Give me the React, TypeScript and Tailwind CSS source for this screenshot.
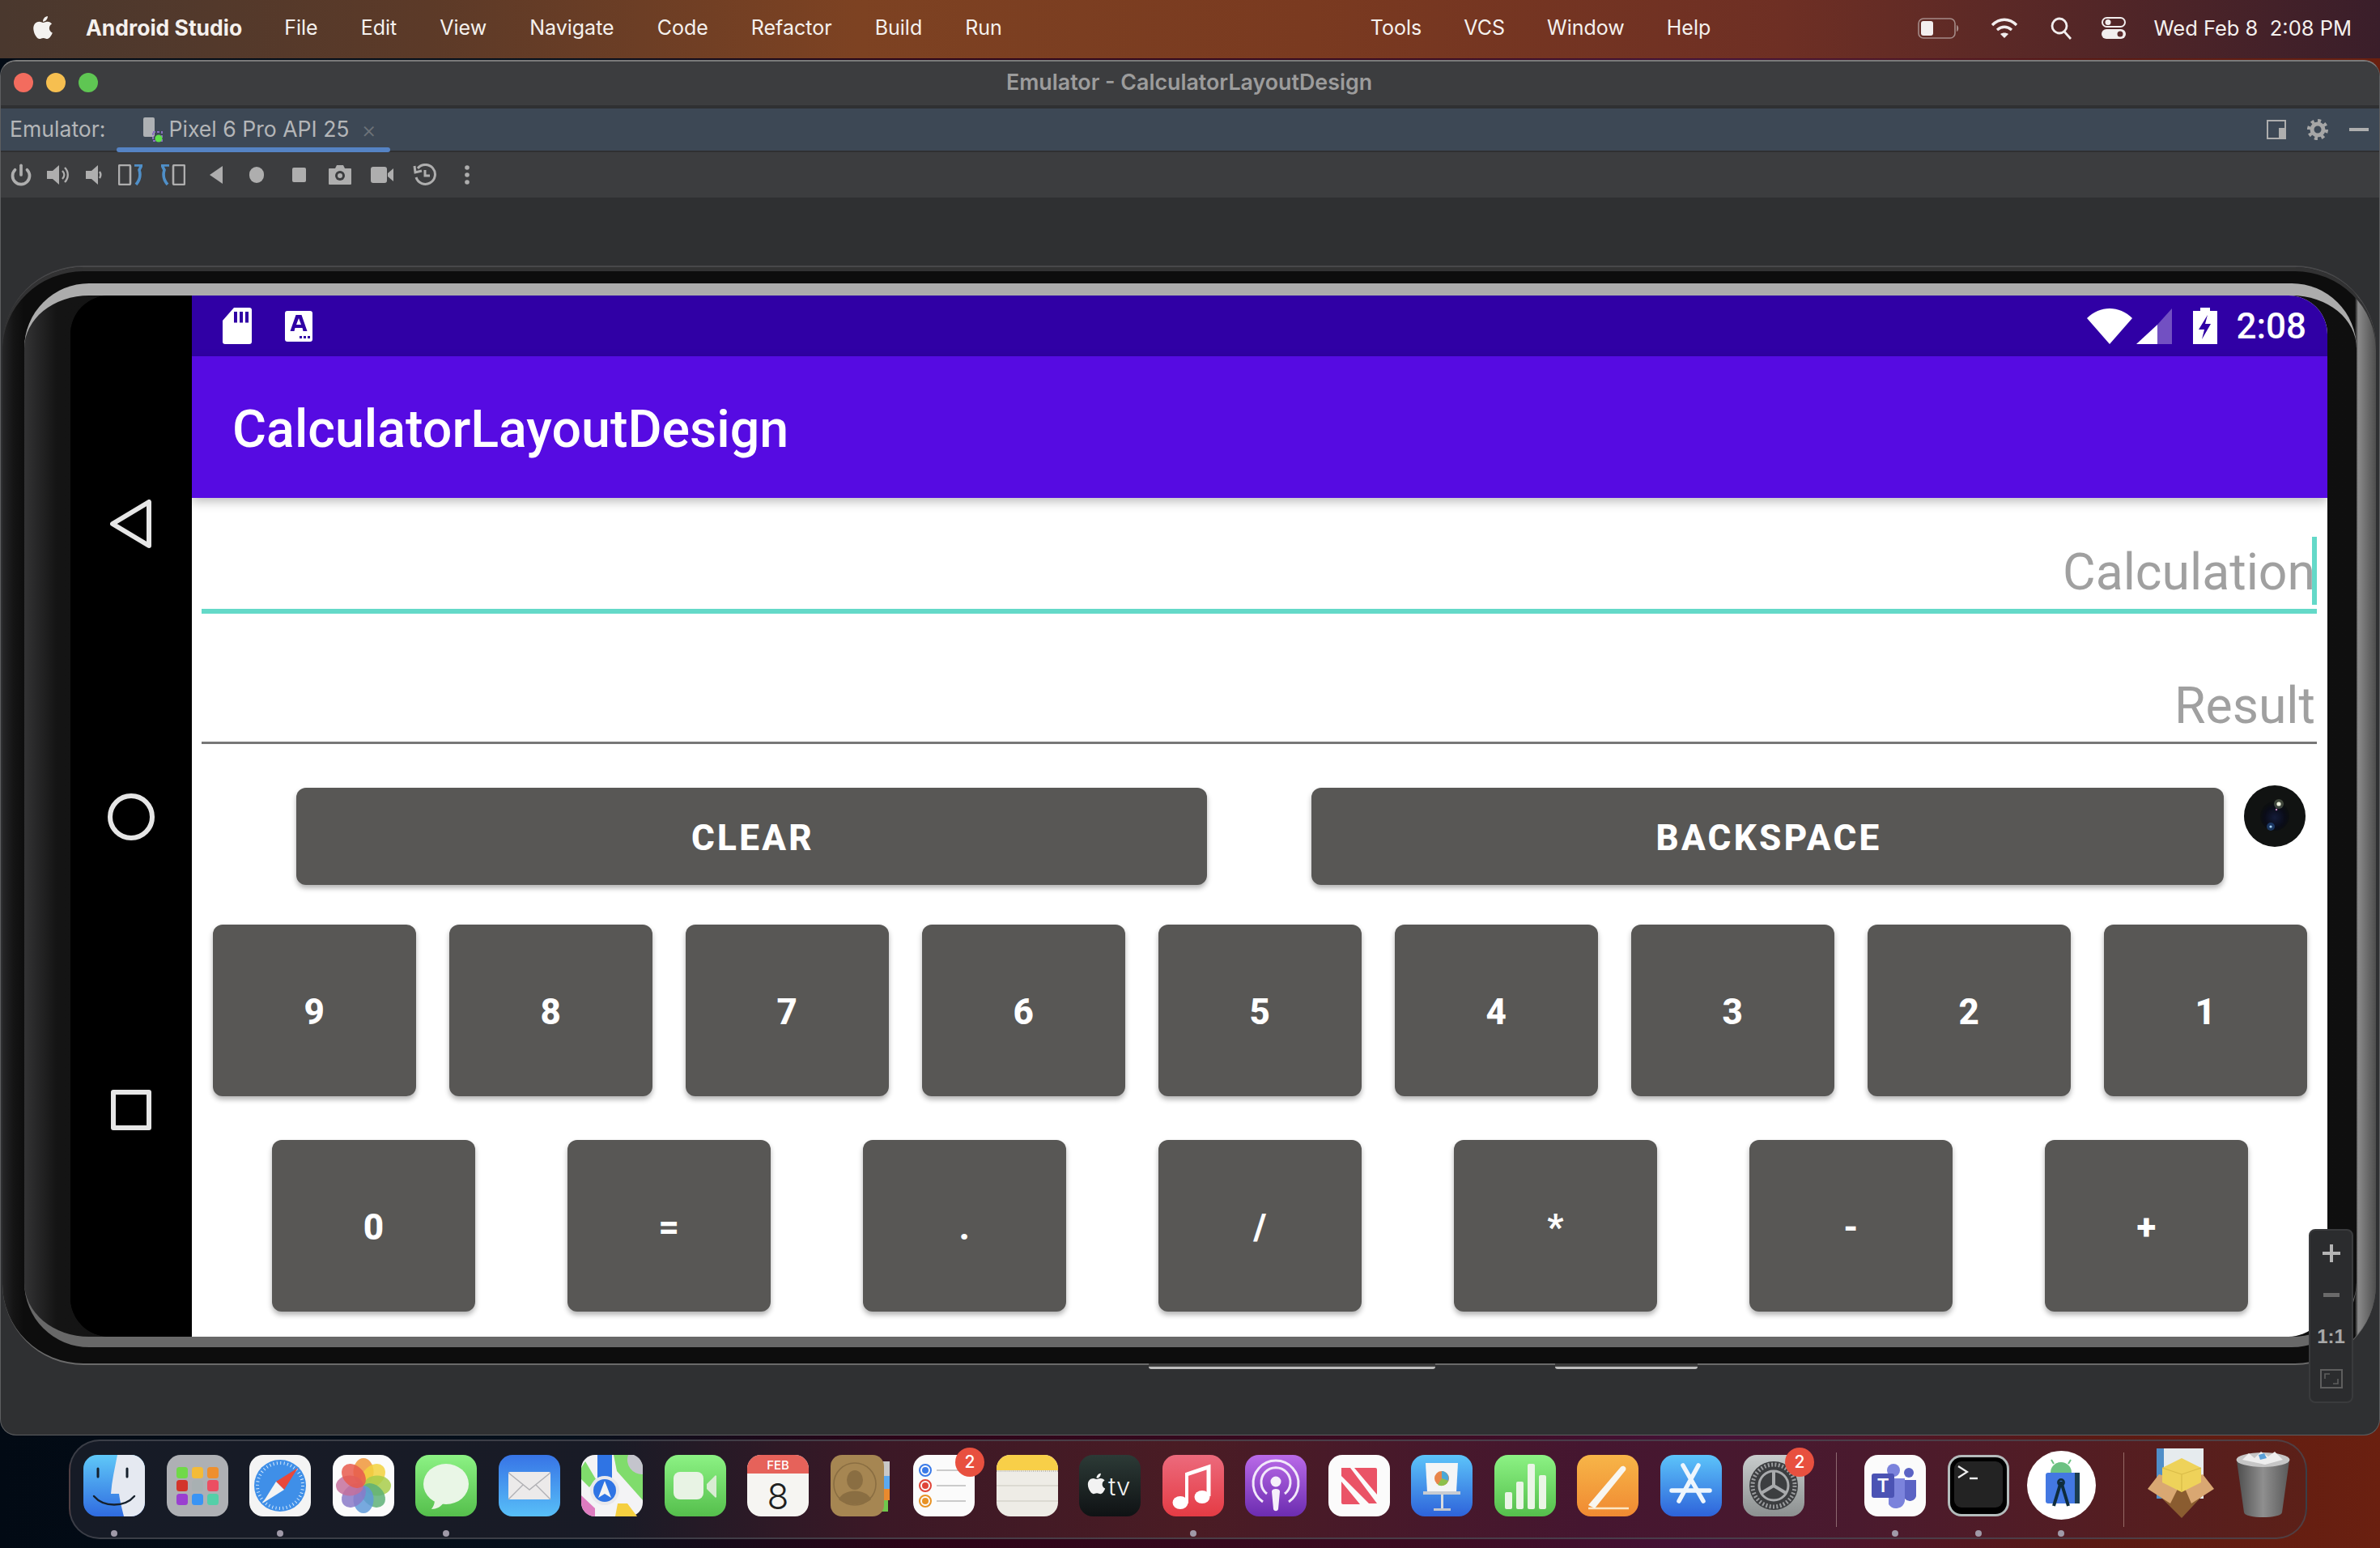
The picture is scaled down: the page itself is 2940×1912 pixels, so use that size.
import { ReactNode } from "react";
import { FaApple } from "react-icons/fa";
import { Power } from "lucide-react";

const menuLeft = ["File", "Edit", "View", "Navigate", "Code", "Refactor", "Build", "Run"];
const menuRight = ["Tools", "VCS", "Window", "Help"];
const digitKeys = ["9", "8", "7", "6", "5", "4", "3", "2", "1"];
const opKeys = ["0", "=", ".", "/", "*", "-", "+"];

function KeyButton({ label, className }: { label: string; className: string }) {
  return (
    <button className={`flex items-center justify-center rounded-[12px] bg-[#585755] pt-[3px] pl-[3px] font-['Roboto',sans-serif] text-[44px] leading-none font-extrabold tracking-[0.075em] text-white shadow-[0_4px_6px_rgba(0,0,0,0.3)] ${className}`}>
      {label}
    </button>
  );
}

function Tool({ w, children }: { w: string; children: ReactNode }) {
  return <div className={`flex h-full items-center justify-center ${w}`}>{children}</div>;
}

function ToolBar() {
  const c = "#aeaeae";
  return (
    <div className="flex h-[56px] items-center bg-[#3c3d3f] pl-[2px]">
      <Tool w="w-[45px]"><Power size={28} color={c} strokeWidth={3.2} /></Tool>
      <Tool w="w-[45px]">
        <svg width="28" height="26" viewBox="0 0 28 26"><path d="M1 8h7l8-7v24l-8-7H1z" fill={c} /><path d="M20 8c3 3 3 7 0 10M23 4c5 5 5 13 0 18" fill="none" stroke={c} strokeWidth="2.4" /></svg>
      </Tool>
      <Tool w="w-[45px]">
        <svg width="22" height="26" viewBox="0 0 22 26"><path d="M1 8h7l8-7v24l-8-7H1z" fill={c} /><path d="M18 9c2 3 2 5 0 8" fill="none" stroke={c} strokeWidth="2.4" /></svg>
      </Tool>
      <Tool w="w-[46px]">
        <svg width="30" height="26" viewBox="0 0 30 26"><rect x="1" y="1" width="14" height="24" rx="1.5" fill="none" stroke={c} strokeWidth="2.6" /><path d="M20 1h9l-3 6c2 6 1 12-4 18" fill="none" stroke="#4f8fc8" strokeWidth="3.6" /></svg>
      </Tool>
      <Tool w="w-[60px]">
        <svg width="30" height="26" viewBox="0 0 30 26"><rect x="15" y="1" width="14" height="24" rx="1.5" fill="none" stroke={c} strokeWidth="2.6" /><path d="M10 1H1l3 6c-2 6-1 12 4 18" fill="none" stroke="#4f8fc8" strokeWidth="3.6" /></svg>
      </Tool>
      <Tool w="w-[46px]"><svg width="18" height="22" viewBox="0 0 18 22"><path d="M17 0v22L1 11z" fill={c} /></svg></Tool>
      <Tool w="w-[54px]"><div className="h-[20px] w-[18px] rounded-full bg-[#aeaeae]" /></Tool>
      <Tool w="w-[50px]"><div className="h-[18px] w-[17px] rounded-[2px] bg-[#aeaeae]" /></Tool>
      <Tool w="w-[52px]">
        <svg width="30" height="26" viewBox="0 0 30 26"><path d="M2 5h7l2-4h8l2 4h7a1 1 0 0 1 1 1v18a1 1 0 0 1-1 1H2a1 1 0 0 1-1-1V6a1 1 0 0 1 1-1z" fill={c} /><circle cx="15" cy="14" r="6" fill="#3c3d3f" /><circle cx="15" cy="14" r="3" fill={c} /></svg>
      </Tool>
      <Tool w="w-[52px]">
        <svg width="30" height="24" viewBox="0 0 30 24"><rect x="1" y="2" width="20" height="20" rx="3" fill={c} /><path d="M22 10l7-6v16l-7-6z" fill={c} /></svg>
      </Tool>
      <Tool w="w-[54px]">
        <svg width="30" height="28" viewBox="0 0 30 28" fill="none" stroke={c} strokeWidth="3"><path d="M6 6a12 12 0 1 1-2 11" /><path d="M2 3l1 8 8-2" /><path d="M15 8v7h6" /></svg>
      </Tool>
      <Tool w="w-[50px]">
        <svg width="8" height="24" viewBox="0 0 8 24" fill={c}><circle cx="4" cy="3" r="2.8" /><circle cx="4" cy="12" r="2.8" /><circle cx="4" cy="21" r="2.8" /></svg>
      </Tool>
    </div>
  );
}

function MenuBar() {
  return (
    <div className="flex h-[72px] shrink-0 items-center bg-[linear-gradient(90deg,#4a382e_0%,#5c3a28_18%,#7d4222_36%,#7a3a20_55%,#6e2f24_75%,#3a1e2a_100%)] pr-[35px] pb-[2px] pl-[37px] font-['Inter',sans-serif] text-[25px] text-[#f5f1ee]">
      <FaApple size={32} color="#f4f2f0" className="mb-[2px]" />
      <span className="ml-[37px] text-[26.5px] font-bold">Android Studio</span>
      <div className="ml-[52px] flex gap-[53px]">
        {menuLeft.map((m) => (
          <span key={m}>{m}</span>
        ))}
      </div>
      <div className="ml-[455px] flex gap-[52px]">
        {menuRight.map((m) => (
          <span key={m}>{m}</span>
        ))}
      </div>
      <div className="ml-auto flex items-center">
        <svg width="52" height="26" viewBox="0 0 52 26"><rect x="1" y="1" width="45" height="24" rx="6" fill="none" stroke="#a58b88" strokeWidth="1.6" /><rect x="4" y="4" width="15" height="18" rx="3" fill="#f2eeee" /><path d="M48 9c3 1 3 7 0 8z" fill="#a58b88" /></svg>
        <svg className="ml-[38px]" width="34" height="26" viewBox="0 0 34 26" fill="none" stroke="#f2eeee" strokeWidth="3.4"><path d="M2 9c9-9 21-9 30 0" /><path d="M8 15c6-5 12-5 18 0" /><path d="M17 25l-5-5c3-2 7-2 10 0z" fill="#f2eeee" stroke="none" /></svg>
        <svg className="ml-[40px]" width="26" height="28" viewBox="0 0 26 28" fill="none" stroke="#f2eeee" strokeWidth="2.8"><circle cx="11" cy="11" r="9" /><path d="M17 18l8 9" /></svg>
        <svg className="ml-[37px]" width="30" height="28" viewBox="0 0 30 28"><rect x="1" y="1" width="28" height="11" rx="5.5" fill="none" stroke="#f2eeee" strokeWidth="2" /><circle cx="8" cy="6.5" r="3.5" fill="#f2eeee" /><rect x="0" y="15" width="30" height="12" rx="6" fill="#f2eeee" /><circle cx="23" cy="21" r="3.5" fill="#5a2a2c" /></svg>
        <span className="ml-[34px] text-[25.5px] whitespace-pre">Wed Feb 8  2:08 PM</span>
      </div>
    </div>
  );
}

function StatusBar() {
  return (
    <div className="flex h-[75px] shrink-0 items-center bg-[#3000a5] pr-[26px] pl-[38px]">
      <svg width="36" height="45" viewBox="0 0 36 45"><path d="M14 0h19a3 3 0 0 1 3 3v39a3 3 0 0 1-3 3H3a3 3 0 0 1-3-3V16z" fill="#fff" /><path d="M14 9h4v15h-4zM21 9h4v15h-4zM28 9h4v15h-4z" fill="#3000a5" transform="translate(0 -3) scale(1 .9)" /></svg>
      <svg className="ml-[41px]" width="34" height="38" viewBox="0 0 34 38">
        <rect width="34" height="38" rx="3" fill="#fff" />
        <path d="M13 5h7l7 20h-5l-1-4h-9l-1 4H6zm.5 12h6l-3-8z" fill="#3000a5" fillRule="evenodd" transform="translate(.5 0)" />
        <path d="M18 31h3v3h-3zM23 31h3v3h-3zM28 31h3v3h-3z" fill="#3000a5" />
      </svg>
      <div className="ml-auto flex items-center">
        <svg width="56" height="44" viewBox="0 0 56 44"><path d="M28 44L0 12C16-4 40-4 56 12z" fill="#fff" /></svg>
        <svg className="ml-[5px]" width="44" height="44" viewBox="0 0 44 44"><path d="M44 0v44H26V20z" fill="#7250c2" /><path d="M26 20v24H0z" fill="#fff" /></svg>
        <svg className="ml-[26px]" width="30" height="45" viewBox="0 0 30 45"><path d="M9 0h12v4h9v41H0V4h9z" fill="#fff" /><path d="M18 9L7 27h7l-3 12 11-19h-7z" fill="#3000a5" /></svg>
        <span className="ml-[23px] font-['Roboto',sans-serif] text-[44px] leading-none font-medium text-white">2:08</span>
      </div>
    </div>
  );
}

function PhoneScreen() {
  return (
    <div className="relative flex h-[1286px] w-full overflow-hidden rounded-[48px] bg-black">
      <div className="flex w-[150px] shrink-0 flex-col items-center gap-[303px] bg-black pt-[252px]">
        <svg width="52" height="60" viewBox="0 0 52 60"><path d="M48 3v54L3 30z" fill="none" stroke="#e6e6e6" strokeWidth="6" strokeLinejoin="round" /></svg>
        <svg width="58" height="58" viewBox="0 0 58 58"><circle cx="29" cy="29" r="26" fill="none" stroke="#e6e6e6" strokeWidth="6" /></svg>
        <div className="mt-[5px] h-[50px] w-[50px] rounded-[3px] border-[6px] border-[#e6e6e6]" />
      </div>
      <div className="flex min-w-0 flex-1 flex-col bg-white">
        <StatusBar />
        <div className="relative z-10 flex h-[175px] shrink-0 items-center bg-[#560be2] pt-[6px] pl-[50px] shadow-[0_5px_12px_rgba(0,0,0,0.25)]">
          <h1 className="font-['Roboto',sans-serif] text-[64.5px] font-medium text-white">CalculatorLayoutDesign</h1>
        </div>
        <div className="pr-[13px] pl-[12px]">
          <div className="relative flex h-[143px] items-end justify-end border-b-[6px] border-[#64d9c8] pb-[3px]">
            <span className="pr-[2px] font-['Roboto',sans-serif] text-[62.5px] leading-[84px] text-[#a0a0a0]">Calculation</span>
            <div className="absolute right-0 bottom-[5px] h-[84px] w-[6px] bg-[#64d9c8]" />
          </div>
          <div className="flex h-[161px] items-end justify-end border-b-[3px] border-[#777777] pb-[2px]">
            <span className="pr-[2px] font-['Roboto',sans-serif] text-[62.5px] leading-[84px] text-[#a0a0a0]">Result</span>
          </div>
        </div>
        <div className="mt-[54px] flex gap-[129px] pl-[129px]">
          <KeyButton label="CLEAR" className="h-[120px] w-[1125px]" />
          <KeyButton label="BACKSPACE" className="h-[120px] w-[1127px]" />
        </div>
        <div className="mt-[49px] flex gap-[41.5px] pl-[26px]">
          {digitKeys.map((d) => (
            <KeyButton key={d} label={d} className="h-[212px] w-[250.5px]" />
          ))}
        </div>
        <div className="mt-[54px] flex gap-[114px] pl-[99px]">
          {opKeys.map((d) => (
            <KeyButton key={d} label={d} className="h-[212px] w-[251px]" />
          ))}
        </div>
      </div>
      <svg className="absolute top-[605px] left-[2685px]" width="76" height="76" viewBox="0 0 76 76">
        <defs>
          <radialGradient id="gLens" cx=".5" cy=".55" r=".5"><stop offset="0" stopColor="#141c3a" /><stop offset=".7" stopColor="#0a0c18" /><stop offset="1" stopColor="#0c0f10" /></radialGradient>
        </defs>
        <circle cx="38" cy="38" r="38" fill="#111312" />
        <circle cx="38" cy="38" r="18" fill="url(#gLens)" />
        <circle cx="43" cy="23" r="6" fill="#7d8a70" opacity=".45" />
        <circle cx="43" cy="23" r="2.6" fill="#eef2de" />
        <circle cx="40" cy="30" r="1.2" fill="#c88cc0" />
        <circle cx="33" cy="51" r="5" fill="#2c5fa8" opacity=".5" />
        <circle cx="33" cy="51" r="1.6" fill="#a8d4f8" />
      </svg>
    </div>
  );
}

function ZoomPanel() {
  return (
    <div className="absolute top-[1442px] right-[32px] z-20 flex h-[215px] w-[55px] flex-col items-center rounded-[8px] border-2 border-[#3a3b3d] bg-[#2b2c2e] font-['Liberation_Sans',sans-serif] text-[#a8a8a8]">
      <svg className="mt-[17px]" width="22" height="22" viewBox="0 0 22 22"><path d="M9 0h4v9h9v4h-9v9H9v-9H0V9h9z" fill="#b4b4b4" /></svg>
      <div className="mt-[38px] h-[5px] w-[20px] bg-[#6a6a6a]" />
      <span className="mt-[37px] text-[24px] leading-none font-bold">1:1</span>
      <svg className="mt-[28px]" width="28" height="24" viewBox="0 0 28 24" fill="none" stroke="#5e5e5e"><rect x="1" y="1" width="26" height="22" strokeWidth="2" /><path d="M6 12V6h6M22 12v6h-6" strokeWidth="1.6" /></svg>
    </div>
  );
}

function EmulatorWindow() {
  return (
    <div className="relative mt-[2px] flex h-[1699px] shrink-0 flex-col overflow-hidden rounded-[20px] border border-t-2 border-[#5d5e60] border-t-[#7a7a7a] bg-[#2f3032] font-['Inter',sans-serif]">
      <div className="flex h-[54px] shrink-0 items-center bg-[#3c3d3f] pb-[3px]">
        <div className="ml-[16px] flex gap-[16px]">
          <div className="h-[24px] w-[24px] rounded-full bg-[#f36c5e]" />
          <div className="h-[24px] w-[24px] rounded-full bg-[#f6bf50]" />
          <div className="h-[24px] w-[24px] rounded-full bg-[#5fc653]" />
        </div>
        <span className="ml-[1122px] text-[26.8px] font-semibold text-[#9c9c9c]">Emulator - CalculatorLayoutDesign</span>
      </div>
      <div className="h-[4px] shrink-0 bg-[#2f3032]" />
      <div className="flex h-[52px] shrink-0 items-center bg-[#3d4855] text-[#b4b6b8]">
        <span className="ml-[11px] text-[26.6px]">Emulator:</span>
        <div className="relative ml-[14px] flex h-full w-[338px] items-center pl-[32px]">
          <svg width="26" height="32" viewBox="0 0 26 32"><rect x="1" y="1" width="14" height="24" rx="2" fill="#aeb1b4" /><rect x="13" y="19" width="11" height="11" fill="none" stroke="#8a6fc0" strokeWidth="2" strokeDasharray="3 2" /><circle cx="20" cy="27" r="4.5" fill="#5fe04a" /></svg>
          <span className="ml-[6px] text-[26.6px] whitespace-nowrap">Pixel 6 Pro API 25</span>
          <span className="ml-[15px] text-[28px] leading-none font-light text-[#6d7379]">×</span>
          <div className="absolute inset-x-0 -bottom-[2px] h-[6px] rounded-[3px] bg-[#5583c4]" />
        </div>
        <svg className="ml-auto" width="24" height="24" viewBox="0 0 24 24"><path d="M1 1h22v22H1z" fill="none" stroke="#aeaeae" strokeWidth="2" /><path d="M15 10h8v13h-8z" fill="#aeaeae" /></svg>
        <svg className="ml-[26px]" width="26" height="26" viewBox="0 0 26 26"><circle cx="13" cy="13" r="7" fill="none" stroke="#a6a6a6" strokeWidth="5" /><circle cx="13" cy="13" r="11" fill="none" stroke="#a6a6a6" strokeWidth="4" strokeDasharray="4 4.6" /></svg>
        <div className="mr-[13px] ml-[26px] h-[4px] w-[24px] bg-[#aeaeae]" />
      </div>
      <div className="h-[2px] shrink-0 bg-[#2f3032]" />
      <ToolBar />
      <div className="relative mt-[84px] mr-[4px] ml-[2px] h-[1358px] shrink-0 rounded-[100px] border-t-[2px] border-b-[2px] border-t-[#48484a] border-b-[#6a6a6a] bg-[linear-gradient(90deg,#262627_0px,#141414_14px,#0d0d0d_27px,#0d0d0d_calc(100%-26px),#8a8a8a_calc(100%-22px),#4e4e4e_100%)] pt-[20px] pr-[24px] pb-[20px] pl-[27px] shadow-[inset_0_5px_0_#323233]">
        <div className="rounded-[80px] border-t-[15px] border-b-[13px] border-t-[#acacac] border-b-[#686868] bg-[linear-gradient(90deg,#333334_0px,#141414_40px,#0f0f0f_100%)] pr-[36px] pl-[57px]">
          <PhoneScreen />
        </div>
        <div className="absolute -bottom-[7px] left-[1416px] h-[7px] w-[354px] rounded-b-[3px] border-b-[3px] border-[#bdbdbd] bg-[#3b3b3b]" />
        <div className="absolute -bottom-[7px] left-[1918px] h-[7px] w-[176px] rounded-b-[3px] border-b-[3px] border-[#bdbdbd] bg-[#3b3b3b]" />
      </div>
      <ZoomPanel />
    </div>
  );
}

function Tile({ children, running, badge, className = "w-[76px]" }: { children: ReactNode; running?: boolean; badge?: boolean; className?: string }) {
  return (
    <div className={`relative flex h-[76px] shrink-0 justify-center ${className}`}>
      {children}
      {badge && (
        <div className="absolute -top-[9px] left-[52px] flex h-[36px] w-[36px] items-center justify-center rounded-full bg-[#e8503f] font-['Inter',sans-serif] text-[21px] font-medium text-white">2</div>
      )}
      {running && <div className="absolute -bottom-[25px] left-1/2 h-[8px] w-[8px] -translate-x-1/2 rounded-full bg-[#a09aa8]" />}
    </div>
  );
}

function Svg({ children }: { children: ReactNode }) {
  return <svg width="76" height="76" viewBox="0 0 76 76">{children}</svg>;
}

function Dock() {
  return (
    <div className="mt-[5px] ml-[85px] flex h-[123px] w-[2765px] shrink-0 items-start gap-[26.5px] rounded-[38px] border-2 border-[#4b4d55]/70 bg-[linear-gradient(90deg,#161b26_0%,#191b26_24%,#3b1826_36%,#4a1c24_50%,#451630_68%,#4a1a2e_80%,#5c2018_100%)] pt-[17px] pl-[16px]">
      <svg width="0" height="0" className="absolute">
        <defs>
          <linearGradient id="gFinder" x1="0" y1="0" x2="0" y2="1"><stop offset="0" stopColor="#5fc8f8" /><stop offset="1" stopColor="#2f6be0" /></linearGradient>
          <linearGradient id="gGreen" x1="0" y1="0" x2="0" y2="1"><stop offset="0" stopColor="#8cf284" /><stop offset="1" stopColor="#55bf4c" /></linearGradient>
          <linearGradient id="gMail" x1="0" y1="0" x2="0" y2="1"><stop offset="0" stopColor="#3774e6" /><stop offset="1" stopColor="#58bff8" /></linearGradient>
          <linearGradient id="gMusic" x1="0" y1="0" x2="0" y2="1"><stop offset="0" stopColor="#ec6a7c" /><stop offset="1" stopColor="#e53b44" /></linearGradient>
          <linearGradient id="gPod" x1="0" y1="0" x2="0" y2="1"><stop offset="0" stopColor="#b96ae8" /><stop offset="1" stopColor="#6c2cb0" /></linearGradient>
          <linearGradient id="gKey" x1="0" y1="0" x2="0" y2="1"><stop offset="0" stopColor="#5cc4fa" /><stop offset="1" stopColor="#2e63da" /></linearGradient>
          <linearGradient id="gPages" x1="0" y1="0" x2="0" y2="1"><stop offset="0" stopColor="#f7b548" /><stop offset="1" stopColor="#f08a32" /></linearGradient>
          <linearGradient id="gTv" x1="0" y1="0" x2="0" y2="1"><stop offset="0" stopColor="#2c3a36" /><stop offset="1" stopColor="#0f1214" /></linearGradient>
          <linearGradient id="gGear" x1="0" y1="0" x2="0" y2="1"><stop offset="0" stopColor="#c8cccc" /><stop offset="1" stopColor="#8c9090" /></linearGradient>
          <linearGradient id="gBin" x1="0" y1="0" x2="1" y2="0"><stop offset="0" stopColor="#4e4e4e" /><stop offset=".5" stopColor="#8f8f8f" /><stop offset="1" stopColor="#595959" /></linearGradient>
        </defs>
      </svg>
      <Tile running>
        <Svg>
          <rect width="76" height="76" rx="17" fill="url(#gFinder)" />
          <path d="M42 0h17a17 17 0 0 1 17 17v42a17 17 0 0 1-17 17H50c-3-12-5-20-6-28H34c1-16 5-32 8-48z" fill="#e5e9f1" />
          <path d="M18 17v10M54 17v10" stroke="#15202c" strokeWidth="3" strokeLinecap="round" />
          <path d="M13 51c12 14 38 14 50 0" stroke="#15202c" strokeWidth="2.4" fill="none" strokeLinecap="round" />
        </Svg>
      </Tile>
      <Tile>
        <Svg>
          <rect width="76" height="76" rx="17" fill="#aeb0b4" />
          {[["#70d948", 12, 15], ["#f4bb38", 31, 15], ["#ee8f2e", 50, 15], ["#d3352a", 12, 31], ["#a8b0b2", 31, 31], ["#ec4e62", 50, 31], ["#9a3fd0", 12, 48], ["#3a94f4", 31, 48], ["#54cfa8", 50, 48]].map(([f, x, y]) => (
            <rect key={`${x}-${y}`} x={x as number} y={y as number} width="14" height="14" rx="3.5" fill={f as string} />
          ))}
        </Svg>
      </Tile>
      <Tile running>
        <Svg>
          <rect width="76" height="76" rx="17" fill="#f4f4f4" />
          <circle cx="38" cy="38" r="32" fill="#3f8fe8" />
          <circle cx="38" cy="38" r="28" fill="none" stroke="#d8eafa" strokeWidth="4" strokeDasharray="1 3.4" />
          <path d="M60 16L33 33l10 10z" fill="#e8483c" />
          <path d="M16 60l27-17-10-10z" fill="#f4f4f4" />
        </Svg>
      </Tile>
      <Tile>
        <Svg>
          <rect width="76" height="76" rx="17" fill="#fbfbfb" />
          {[["#f0963a", 0], ["#f2d13e", 45], ["#a8cc4a", 90], ["#5eb078", 135], ["#5f9ad8", 180], ["#8a7ac8", 225], ["#c4709c", 270], ["#e85a4c", 315]].map(([f, r]) => (
            <ellipse key={r as number} cx="38" cy="21" rx="12.5" ry="17" fill={f as string} opacity=".85" transform={`rotate(${r} 38 38)`} />
          ))}
        </Svg>
      </Tile>
      <Tile running>
        <Svg>
          <rect width="76" height="76" rx="17" fill="url(#gGreen)" />
          <ellipse cx="38" cy="36" rx="28" ry="25" fill="#e9f6e6" />
          <path d="M24 55c0 6-2 9-4 12 6 0 12-3 15-8z" fill="#e9f6e6" />
        </Svg>
      </Tile>
      <Tile>
        <Svg>
          <rect width="76" height="76" rx="17" fill="url(#gMail)" />
          <rect x="12" y="21" width="52" height="34" rx="2" fill="#eceaea" />
          <path d="M12 22l26 21 26-21M12 55l18-18M64 55L46 37" fill="none" stroke="#b0b0b4" strokeWidth="1.4" />
        </Svg>
      </Tile>
      <Tile>
        <Svg>
          <rect width="76" height="76" rx="17" fill="#f3f3f5" />
          <path d="M40 0h19a17 17 0 0 1 17 17v39L44 20z" fill="#80dc6c" />
          <path d="M0 16V30l10 10 8-10L5 8z" fill="#80dc6c" />
          <path d="M58 0a18 18 0 0 0 18 24v-7a17 17 0 0 0-11-17z" fill="#c4c4cc" />
          <path d="M20 0h18v30H20z" fill="#2f74e4" />
          <path d="M0 59v0a17 17 0 0 0 17 17V66L0 50z" fill="#de7cc0" />
          <path d="M42 76l3-16 12 0 12 16z" fill="#f5cf40" />
          <circle cx="29" cy="44" r="18" fill="#e8e8ec" />
          <circle cx="29" cy="44" r="14" fill="#2f74e4" />
          <path d="M29 32l8 21-8-5-8 5z" fill="#f4f4f4" />
        </Svg>
      </Tile>
      <Tile>
        <Svg>
          <rect width="76" height="76" rx="17" fill="url(#gGreen)" />
          <rect x="11" y="21" width="37" height="34" rx="8" fill="#e8f3e4" />
          <path d="M52 36l10-10a1 1 0 0 1 2 1v24a1 1 0 0 1-2 1L52 42z" fill="#d8ecd2" />
        </Svg>
      </Tile>
      <Tile>
        <Svg>
          <rect width="76" height="76" rx="17" fill="#f6f5f2" />
          <path d="M0 23V17A17 17 0 0 1 17 0h42a17 17 0 0 1 17 17v6z" fill="#e6625a" />
          <text x="38" y="18" textAnchor="middle" fontFamily="Inter" fontSize="15" fontWeight="500" fill="#fff">FEB</text>
          <text x="38" y="67" textAnchor="middle" fontFamily="Inter" fontSize="44" fontWeight="300" fill="#1f1f1f">8</text>
        </Svg>
      </Tile>
      <Tile>
        <Svg>
          <rect x="60" y="8" width="13" height="20" fill="#c8c8c8" /><rect x="60" y="26" width="13" height="16" fill="#5aa9f0" /><rect x="60" y="42" width="13" height="14" fill="#e98a2e" /><rect x="60" y="56" width="11" height="14" fill="#70c84c" />
          <rect width="66" height="76" rx="14" fill="#a68652" />
          <circle cx="30" cy="36" r="26" fill="none" stroke="#8a6e42" strokeWidth="1.6" />
          <ellipse cx="30" cy="31" rx="10" ry="12" fill="#8a6e42" />
          <path d="M10 55c6-14 34-14 40 0-10 8-30 8-40 0z" fill="#8a6e42" />
        </Svg>
      </Tile>
      <Tile badge>
        <Svg>
          <rect width="76" height="76" rx="17" fill="#fbfbfb" />
          <circle cx="15" cy="19" r="7" fill="none" stroke="#3a7ae8" strokeWidth="2" /><circle cx="15" cy="19" r="4" fill="#3a7ae8" />
          <circle cx="15" cy="38" r="7" fill="none" stroke="#e04438" strokeWidth="2" /><circle cx="15" cy="38" r="4" fill="#e04438" />
          <circle cx="15" cy="57" r="7" fill="none" stroke="#e89224" strokeWidth="2" /><circle cx="15" cy="57" r="4" fill="#e89224" />
          <path d="M29 19h36M29 38h36M29 57h36" stroke="#bcbcbc" strokeWidth="1.6" />
        </Svg>
      </Tile>
      <Tile>
        <Svg>
          <rect width="76" height="76" rx="17" fill="#eeece6" />
          <path d="M0 19V17A17 17 0 0 1 17 0h42a17 17 0 0 1 17 17v2z" fill="#f8cf48" />
          <path d="M0 20h76" stroke="#bdbab2" strokeWidth="2" strokeDasharray="1 1.5" />
          <path d="M0 38h76M0 57h76" stroke="#d6d4cc" strokeWidth="1.4" />
        </Svg>
      </Tile>
      <Tile>
        <Svg>
          <rect width="76" height="76" rx="17" fill="url(#gTv)" />
          <FaApple x="7" y="21" size="29" color="#f2f2f2" />
          <text x="36" y="50" fontFamily="Inter" fontSize="31" fontWeight="300" fill="#f2f2f2">tv</text>
        </Svg>
      </Tile>
      <Tile running>
        <Svg>
          <rect width="76" height="76" rx="17" fill="url(#gMusic)" />
          <path d="M30 24l27-9v36" fill="none" stroke="#fff" strokeWidth="5" />
          <path d="M30 22v38" stroke="#fff" strokeWidth="4" />
          <ellipse cx="22" cy="59" rx="9.5" ry="8" fill="#fff" /><ellipse cx="49" cy="52" rx="9.5" ry="8" fill="#fff" />
        </Svg>
      </Tile>
      <Tile>
        <Svg>
          <rect width="76" height="76" rx="17" fill="url(#gPod)" />
          <path d="M22 58a28 28 0 1 1 32 0M27 48a18 18 0 1 1 22 0" fill="none" stroke="#f2e8fa" strokeWidth="3" />
          <circle cx="38" cy="33" r="6.5" fill="#f6f0fb" />
          <path d="M33 45c0-4 10-4 10 0l-2 22c-1 3-5 3-6 0z" fill="#f6f0fb" />
        </Svg>
      </Tile>
      <Tile>
        <Svg>
          <rect width="76" height="76" rx="17" fill="#fbfbfb" />
          <path d="M16 16h11l33 44H50L16 26zM32 16h26a2 2 0 0 1 2 2v31zM16 33l23 28H18a2 2 0 0 1-2-2z" fill="#ea5366" />
        </Svg>
      </Tile>
      <Tile>
        <Svg>
          <rect width="76" height="76" rx="17" fill="url(#gKey)" />
          <path d="M18 10h40l-2 36H20z" fill="#f4f5f6" />
          <circle cx="38" cy="29" r="9" fill="#e8854a" /><path d="M38 29V20a9 9 0 0 1 8 12z" fill="#4aa8d8" /><path d="M38 29l8 3a9 9 0 0 1-13 5z" fill="#8cc04c" />
          <path d="M15 45h46v4H15z" fill="#c8ccd2" />
          <path d="M37 49h3v18h-3z" fill="#d8dce0" /><path d="M28 66h21v3H28z" fill="#c2c6cc" />
        </Svg>
      </Tile>
      <Tile>
        <Svg>
          <rect width="76" height="76" rx="17" fill="url(#gGreen)" />
          <rect x="13" y="46" width="9" height="21" rx="2" fill="#eaf5e6" /><rect x="27" y="33" width="9" height="34" rx="2" fill="#eaf5e6" /><rect x="41" y="11" width="9" height="56" rx="2" fill="#eaf5e6" /><rect x="55" y="25" width="9" height="42" rx="2" fill="#eaf5e6" />
        </Svg>
      </Tile>
      <Tile>
        <Svg>
          <rect width="76" height="76" rx="17" fill="url(#gPages)" />
          <path d="M14 66h50" stroke="#fbe6c4" strokeWidth="2.4" />
          <path d="M14 62L54 15c3-3 8 0 6 4L22 66z" fill="#f8f6f0" />
        </Svg>
      </Tile>
      <Tile>
        <Svg>
          <rect width="76" height="76" rx="17" fill="url(#gKey)" />
          <path d="M28 13l25 44M47 13L23 57" stroke="#eef6fd" strokeWidth="5.5" strokeLinecap="round" />
          <path d="M14 44h47" stroke="#eef6fd" strokeWidth="5.5" strokeLinecap="round" />
        </Svg>
      </Tile>
      <Tile badge>
        <Svg>
          <rect width="76" height="76" rx="17" fill="url(#gGear)" />
          <circle cx="38" cy="38" r="30" fill="#3c3e40" />
          <circle cx="38" cy="38" r="26" fill="none" stroke="#9a9c9e" strokeWidth="5" strokeDasharray="2 2.4" />
          <circle cx="38" cy="38" r="18" fill="none" stroke="#a8aaac" strokeWidth="3" />
          <path d="M38 38V21M38 38l15 9M38 38l-15 9" stroke="#a8aaac" strokeWidth="4" />
        </Svg>
      </Tile>
      <div className="mt-[-3px] mr-[8px] ml-[12px] h-[92px] w-[1px] shrink-0 bg-[#a98a8c]/70" />
      <Tile running>
        <Svg>
          <rect width="76" height="76" rx="17" fill="#fbfbfb" />
          <circle cx="36" cy="19" r="8" fill="#7b83dc" /><circle cx="55" cy="22" r="6" fill="#5b63c4" />
          <path d="M30 29h20v28a11 11 0 0 1-20 4z" fill="#7b83dc" />
          <path d="M50 31h14v20a8 8 0 0 1-14 3z" fill="#5b63c4" />
          <rect x="9" y="23" width="28" height="30" rx="3" fill="#4b53b4" />
          <text x="23" y="46" textAnchor="middle" fontFamily="Inter" fontSize="23" fontWeight="600" fill="#fff">T</text>
        </Svg>
      </Tile>
      <Tile running>
        <Svg>
          <rect width="76" height="76" rx="17" fill="#b4bcbc" />
          <rect x="3" y="3" width="70" height="70" rx="14" fill="#000" />
          <rect x="8" y="8" width="60" height="57" rx="9" fill="#232323" />
          <path d="M13 14l11 7-11 7" fill="none" stroke="#eee" strokeWidth="2.2" />
          <path d="M27 29h10" stroke="#eee" strokeWidth="2.4" />
        </Svg>
      </Tile>
      <Tile running>
        <svg className="-mt-[5px] shrink-0" width="85" height="85" viewBox="0 0 85 85">
          <circle cx="42.5" cy="42.5" r="42.5" fill="#fff" />
          <path d="M29 27a13 13 0 0 1 26 0z" fill="#6cc282" />
          <path d="M33 16l-3-5M51 16l3-5" stroke="#6cc282" strokeWidth="2" />
          <rect x="23" y="27" width="40" height="38" rx="3" fill="#4378e2" />
          <path d="M59 27h6v38h-6z" fill="#1c3e50" />
          <path d="M42 38L33 68M42 38l9 30" stroke="#0f2c3c" strokeWidth="4" />
          <circle cx="42" cy="39" r="3.6" fill="none" stroke="#0f2c3c" strokeWidth="2.6" />
        </svg>
      </Tile>
      <div className="mt-[-3px] mr-[3px] ml-[12px] h-[92px] w-[1px] shrink-0 bg-[#b08a82]/70" />
      <Tile className="w-[82px]">
        <svg className="-mt-[8px] shrink-0" width="82" height="88" viewBox="0 0 82 88">
          <rect x="11" y="0" width="58" height="62" fill="#e6ebee" />
          <rect x="11" y="0" width="9" height="62" fill="#4f8ec8" />
          <path d="M14 58V34h54v24L42 86z" fill="#8a5c30" />
          <path d="M14 32L0 50l28 18 14-28zM68 32l14 18-28 18-12-28z" fill="#d9a772" />
          <path d="M42 12l24 12v18L42 54 18 42V24z" fill="#eed25a" />
          <path d="M42 32l24-8M42 32L18 24M42 32v22" stroke="#d8bc48" strokeWidth="1.2" fill="none" />
        </svg>
      </Tile>
      <Tile className="w-[67px]">
        <svg className="-mt-[5px] shrink-0" width="67" height="86" viewBox="0 0 67 86">
          <path d="M1 12l9 64c1 8 46 8 47 0l9-64z" fill="url(#gBin)" />
          <ellipse cx="33.5" cy="11" rx="33" ry="9" fill="#c6c6c6" />
          <path d="M8 11l8-8 7 6 8-8 9 6 8-6 10 10-22 6z" fill="#eee" />
          <path d="M28 5l7-2 3 6-8 2z" fill="#5aa0d8" />
        </svg>
      </Tile>
    </div>
  );
}

export default function App() {
  return (
    <div className="flex h-[1912px] w-[2940px] flex-col overflow-hidden bg-[linear-gradient(90deg,#020a14_0%,#06101c_24%,#2c0418_38%,#3c0c22_60%,#451238_72%,#5a1a14_88%,#6a2010_100%)]">
      <MenuBar />
      <EmulatorWindow />
      <Dock />
    </div>
  );
}
